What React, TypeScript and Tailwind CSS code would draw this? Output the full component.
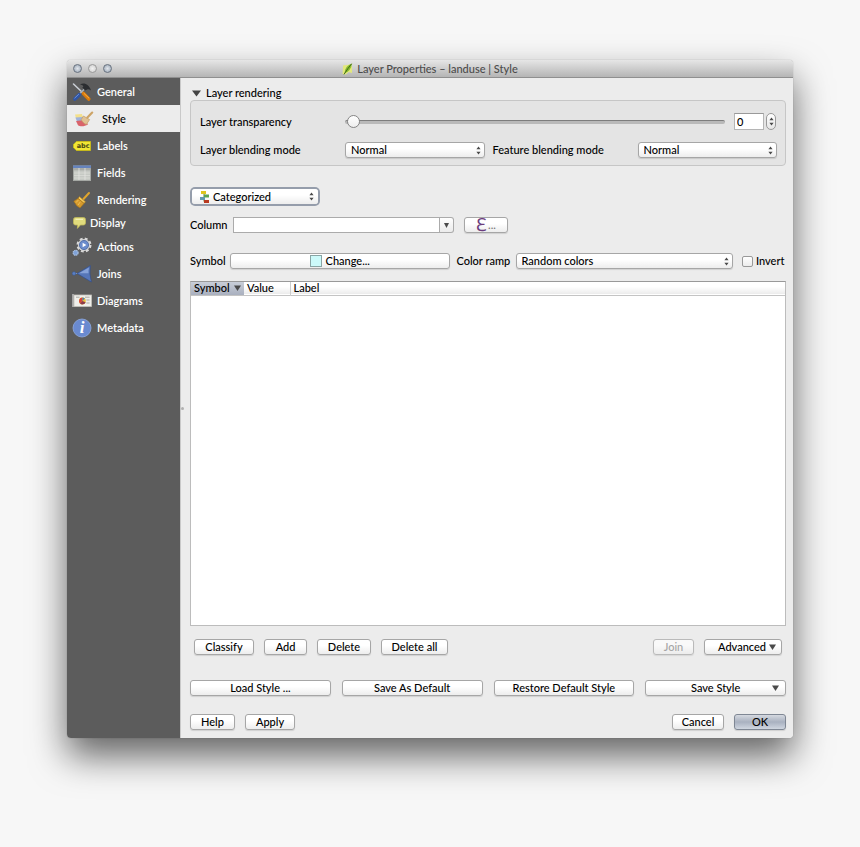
import React from "react";

const buttonLook =
  "h-4 rounded-[3px] border border-[#a6a6a6] bg-linear-to-b from-white from-40% to-[#ededed] text-center leading-[14px] shadow-[0_1px_1px_rgba(0,0,0,0.12)]";

function ToolsIcon() {
  return (
    <svg width="20" height="20" viewBox="0 0 20 20" fill="none">
      <path d="M1.5 2 L11 11" stroke="#c9ced4" strokeWidth="1.6" strokeLinecap="round" />
      <path d="M14 5.5 L7 12.5" stroke="#aab1b8" strokeWidth="1.6" />
      <path d="M7.4 12.6 L2.8 17" stroke="#2f55a5" strokeWidth="3.6" strokeLinecap="round" />
      <path d="M6.6 12.4 L2.8 16" stroke="#6f92d6" strokeWidth="1" strokeLinecap="round" />
      <path d="M11.5 11.5 L16.8 17" stroke="#d9790a" strokeWidth="3.6" strokeLinecap="round" />
      <path d="M12 11.4 L16.8 16" stroke="#f8b04a" strokeWidth="1" strokeLinecap="round" />
      <path d="M8 2.6 C11.5 .2 17 1.6 19 8.6 C17.6 7.4 16.4 7 15.2 7.4 L13 8.6 L10.4 5.4 L11.4 4.2 C10.6 3.2 9.4 2.8 8 2.6Z" fill="#2b2d30" />
    </svg>
  );
}

function StyleIcon() {
  return (
    <svg width="20" height="18" viewBox="0 0 20 18" fill="none">
      <path d="M1 4.6 L8 4 L9 8 L2 8.4Z" fill="#f3e08c" />
      <path d="M1.4 7.4 L9 7 L11 11 L3 11.4Z" fill="#9fb2dc" />
      <path d="M2 11 L11 10 L14 14.4 C10 16.8 6 16.4 4 15.2Z" fill="#d9636b" />
      <path d="M9.4 6 L15.6 9.6 L12.4 14.4 C10 13.8 8.4 12 7.2 9.6Z" fill="#e0c193" stroke="#c29c64" strokeWidth=".7" />
      <path d="M13.4 7.6 L18.2 2.6" stroke="#cda467" strokeWidth="2.2" strokeLinecap="round" />
    </svg>
  );
}

function LabelsIcon() {
  return (
    <svg width="18" height="10" viewBox="0 0 18 10">
      <path d="M3.4 .5 H17.5 V9.5 H3.4 L.5 6.6 V3.4Z" fill="#f2e634" stroke="#c6b91c" />
      <text x="10.2" y="7.4" textAnchor="middle" fontSize="6.5" fontWeight="bold" fill="#4a4714" fontFamily="DejaVu Sans, sans-serif">abc</text>
    </svg>
  );
}

function FieldsIcon() {
  return (
    <svg width="18" height="16" viewBox="0 0 18 16">
      <rect x=".5" y="1" width="17" height="14.5" fill="#c6c9c4" stroke="#a5a8a4" />
      <rect y=".5" width="18" height="2.6" fill="#6583bd" />
      <rect x="1" y="3" width="16" height="2.4" fill="#a9aca8" />
      <path d="M1 8H17M1 10.5H17M1 13H17" stroke="#dcdeda" strokeWidth=".7" />
      <path d="M6 3V15M12 3V15" stroke="#e4e5e2" strokeWidth=".8" />
    </svg>
  );
}

function BroomIcon() {
  return (
    <svg width="18" height="18" viewBox="0 0 18 18" fill="none">
      <path d="M10.5 8 L16 2" stroke="#e0a52c" strokeWidth="2" strokeLinecap="round" />
      <path d="M6.5 5.6 L12.5 10.8 L11 12.4 L5 7.4Z" fill="#f4c95a" stroke="#a87416" strokeWidth=".6" />
      <path d="M5 7.4 L11 12.4 L7 17 L3.8 14.8 L.8 10.2Z" fill="#d69a2c" stroke="#a87416" strokeWidth=".6" />
      <path d="M5.4 9 L3 11.6 M7.4 10.8 L5 14" stroke="#f3c864" strokeWidth=".8" />
    </svg>
  );
}

function BubbleIcon() {
  return (
    <svg width="13" height="12" viewBox="0 0 13 12">
      <path d="M2.5 .5 H10.5 Q12.5 .5 12.5 2.5 V6 Q12.5 8 10.5 8 H7.4 L4.4 11.4 L4.6 8 H2.5 Q.5 8 .5 6 V2.5 Q.5 .5 2.5 .5Z" fill="#e0db7d" stroke="#bfb95a" strokeWidth=".8" />
      <path d="M2.5 2.4H10" stroke="#f4f1b4" strokeWidth="1.2" />
    </svg>
  );
}

function GearsIcon() {
  return (
    <svg width="20" height="20" viewBox="0 0 20 20" fill="none">
      <circle cx="12" cy="8" r="6.4" stroke="#d8d8d8" strokeWidth="2.2" strokeDasharray="2.8 2.23" />
      <circle cx="12" cy="8" r="6" fill="#d8d8d8" />
      <circle cx="12" cy="8" r="4.6" fill="#6b8ccc" stroke="#45639e" strokeWidth=".8" />
      <path d="M10.6 5.8 L14.4 8 L10.6 10.2Z" fill="#fff" />
      <circle cx="3.6" cy="15.8" r="2.5" fill="#7fa2d8" stroke="#a9bfdf" strokeWidth="1.2" strokeDasharray="1.4 .6" />
    </svg>
  );
}

function JoinsIcon() {
  return (
    <svg width="20" height="18" viewBox="0 0 20 18">
      <path d="M4 8.5H8" stroke="#7f9bd0" />
      <circle cx="2" cy="8.5" r="1.8" fill="#5b80c4" stroke="#3a5a96" strokeWidth=".6" />
      <path d="M5 8.5 L18.4 .6 Q17 8.5 19.4 17Z" fill="#5676b8" stroke="#33508d" strokeWidth=".7" />
      <path d="M7 8.3 L17 2.4 Q16.2 5.6 16.6 8.3Z" fill="#86a2d8" />
    </svg>
  );
}

function DiagramsIcon() {
  return (
    <svg width="20" height="14" viewBox="0 0 20 14">
      <path d="M1 0V13" stroke="#d5d5d5" strokeWidth="1.2" />
      <rect x="2" y="1" width="17.5" height="11.5" fill="#f0efeb" stroke="#c4c2bb" strokeWidth=".8" />
      <path d="M4 3.2H7.6M13 3.2H17.6M14.4 6H17.6M14.4 9H17.6" stroke="#a8aaa6" />
      <circle cx="10.4" cy="7" r="3.4" fill="#e9c23b" />
      <path d="M10.4 7V3.6A3.4 3.4 0 0 0 8 9.4Z" fill="#d8433d" />
      <path d="M10.4 7L8 9.4A3.4 3.4 0 0 0 13.6 8.2Z" fill="#8b3a4e" />
      <path d="M10.4 7V3.6A3.4 3.4 0 0 1 12.8 4.6Z" fill="#4b7fb0" />
    </svg>
  );
}

function InfoIcon() {
  return (
    <svg width="20" height="20" viewBox="0 0 20 20">
      <circle cx="10" cy="10" r="9" fill="#6a8ad0" stroke="#8ea9e0" strokeWidth=".8" />
      <text x="10" y="15.4" textAnchor="middle" fontSize="17" fontStyle="italic" fontWeight="bold" fill="#fff" fontFamily="Liberation Serif, serif">i</text>
    </svg>
  );
}

const navItems = [
  { label: "General", icon: ToolsIcon },
  { label: "Style", icon: StyleIcon, selected: true },
  { label: "Labels", icon: LabelsIcon },
  { label: "Fields", icon: FieldsIcon },
  { label: "Rendering", icon: BroomIcon },
  { label: "Display", icon: BubbleIcon, small: true },
  { label: "Actions", icon: GearsIcon },
  { label: "Joins", icon: JoinsIcon },
  { label: "Diagrams", icon: DiagramsIcon },
  { label: "Metadata", icon: InfoIcon },
];

function Sidebar() {
  return (
    <nav className="flex w-[113px] shrink-0 flex-col bg-[#5c5c5c]">
      {navItems.map(({ label, icon: Icon, selected, small }) => (
        <button
          key={label}
          type="button"
          aria-current={selected ? "page" : undefined}
          className={
            selected
              ? "flex h-[27px] items-center gap-[7px] bg-[#ececec] pl-1.5 text-black"
              : small
                ? "flex h-5 items-center gap-[3px] pl-1 font-semibold text-white"
                : "flex h-[27px] items-center gap-1 pl-1 font-semibold text-white"
          }
        >
          <span className={small ? "flex w-4 justify-center" : "flex w-[22px] justify-center"}>
            <Icon />
          </span>
          {label}
        </button>
      ))}
    </nav>
  );
}

function Triangle() {
  return (
    <svg width="7" height="6" viewBox="0 0 7 6" className="shrink-0">
      <path d="M0 .4H7L3.5 6Z" fill="#4a4a4a" />
    </svg>
  );
}

function UpDown({ className = "" }: { className?: string }) {
  return (
    <svg width="5" height="9" viewBox="0 0 5 9" className={className}>
      <path d="M.4 3.2L2.5 .4L4.6 3.2ZM.4 5.8L2.5 8.6L4.6 5.8Z" fill="#4a4a4a" />
    </svg>
  );
}

type ComboProps = { id: string; value: string; className: string };

function Combo({ id, value, className }: ComboProps) {
  return (
    <div className={`relative ${className}`}>
      <select id={id} className={`block w-full appearance-none pl-[5px] text-left ${buttonLook}`}>
        <option>{value}</option>
      </select>
      <UpDown className="pointer-events-none absolute top-1 right-1" />
    </div>
  );
}

function PushButton({ className, children, disabled }: { className: string; children: React.ReactNode; disabled?: boolean }) {
  return (
    <button type="button" disabled={disabled} className={`${buttonLook} ${className}`}>
      {children}
    </button>
  );
}

function TitleBar() {
  return (
    <header className="relative flex h-[18px] shrink-0 items-center justify-center gap-1 rounded-t border-b border-[#8f8f8f] bg-linear-to-b from-[#e6e6e6] to-[#b5b5b5] text-[#4c4c4c]">
      <div className="absolute left-1.5 flex gap-[6px]">
        <button type="button" aria-label="Close" className="size-[9px] rounded-full border border-[#697380] bg-radial from-[#e1e6ec] to-[#98a3b2]" />
        <button type="button" aria-label="Minimize" className="size-[9px] rounded-full border border-[#9a9a9a] bg-radial from-[#f2f2f2] to-[#cccccc]" />
        <button type="button" aria-label="Zoom" className="size-[9px] rounded-full border border-[#697380] bg-radial from-[#e1e6ec] to-[#98a3b2]" />
      </div>
      <svg width="11" height="12" viewBox="0 0 11 12">
        <path d="M1 2.5L8 1.4L10 4V10L6.6 9L4 11.6L.6 11Z" fill="#e2e87c" />
        <path d="M10 .4Q3 2.6 2.6 10Q9 8 10 .4Z" fill="#86b92c" />
        <path d="M9.6 .8Q6 5 2 11.4" stroke="#3f6b18" strokeWidth="1" fill="none" />
      </svg>
      <h1>Layer Properties – landuse | Style</h1>
    </header>
  );
}

function LayerRendering() {
  return (
    <section>
      <button type="button" className="flex h-[14px] items-center gap-[5px] pl-0.5">
        <svg width="9" height="7" viewBox="0 0 9 7">
          <path d="M0 .5H9L4.5 6.5Z" fill="#444" />
        </svg>
        Layer rendering
      </button>
      <div className="flex flex-col gap-3 rounded border border-[#c6c6c6] bg-[#e4e4e4] pt-3 pr-2 pb-[7px] pl-[9px]">
        <div className="flex h-[17px] items-center">
          <label htmlFor="transparency" className="w-[145px] shrink-0">Layer transparency</label>
          <input
            id="transparency"
            type="range"
            min="0"
            max="100"
            defaultValue="0"
            className="h-[14px] min-w-0 flex-1 appearance-none bg-transparent [&::-webkit-slider-runnable-track]:h-1 [&::-webkit-slider-runnable-track]:rounded-full [&::-webkit-slider-runnable-track]:border-t [&::-webkit-slider-runnable-track]:border-[#7d7d7d] [&::-webkit-slider-runnable-track]:bg-[#b9b9b9] [&::-webkit-slider-thumb]:-mt-[6px] [&::-webkit-slider-thumb]:ml-0.5 [&::-webkit-slider-thumb]:size-[13px] [&::-webkit-slider-thumb]:appearance-none [&::-webkit-slider-thumb]:rounded-full [&::-webkit-slider-thumb]:border [&::-webkit-slider-thumb]:border-[#858585] [&::-webkit-slider-thumb]:bg-linear-to-b [&::-webkit-slider-thumb]:from-white [&::-webkit-slider-thumb]:to-[#eeeeee]"
          />
          <input
            aria-label="Transparency value"
            defaultValue="0"
            className="ml-[9px] h-[17px] w-[30px] border border-[#b5b5b5] border-t-[#999] bg-white pl-0.5 leading-[14px]"
          />
          <button type="button" aria-label="Step value" className="mr-px ml-0.5 flex h-[17px] w-[10px] items-center justify-center rounded-full border border-[#999] bg-linear-to-b from-white to-[#e6e6e6]">
            <UpDown />
          </button>
        </div>
        <div className="flex items-center">
          <label htmlFor="layer-blend" className="w-[145px] shrink-0">Layer blending mode</label>
          <Combo id="layer-blend" value="Normal" className="min-w-0 flex-1" />
          <label htmlFor="feature-blend" className="ml-2 w-[145px] shrink-0">Feature blending mode</label>
          <Combo id="feature-blend" value="Normal" className="min-w-0 flex-1" />
        </div>
      </div>
    </section>
  );
}

function RendererSelect() {
  return (
    <div className="relative mt-[23px] ml-0.5 w-[126px] rounded-[3px] ring-2 ring-[#959dab]">
      <select aria-label="Renderer" className="block h-[15px] w-full appearance-none rounded-[3px] bg-linear-to-b from-white from-40% to-[#ededed] pl-[21px] leading-[15px]">
        <option>Categorized</option>
      </select>
      <svg width="10" height="12" viewBox="0 0 10 12" className="pointer-events-none absolute top-0.5 left-2">
        <path d="M4 2V10.5M4 5.5H6M2 8.5H4M4 10.5H6" stroke="#66823e" fill="none" />
        <rect x="1" y="0" width="5" height="3" fill="#dfc51e" />
        <rect x="4" y="3.5" width="5" height="3" fill="#5ba352" />
        <rect x="0" y="6" width="5" height="3" fill="#619ab0" />
        <rect x="4" y="9" width="5" height="3" fill="#b83920" />
      </svg>
      <UpDown className="pointer-events-none absolute top-[3px] right-1" />
    </div>
  );
}

function SymbolSettings() {
  return (
    <>
      <div className="mt-[13px] flex h-4 items-center">
        <label htmlFor="column" className="w-[43px] shrink-0">Column</label>
        <input id="column" className="h-4 w-[207px] border border-[#ababab] bg-white px-1" />
        <button type="button" aria-label="Show columns" className="flex h-4 w-[14px] items-center justify-center rounded-r-[3px] border border-l-0 border-[#ababab] bg-linear-to-b from-white to-[#ebebeb]">
          <svg width="5" height="5" viewBox="0 0 5 5">
            <path d="M0 0H5L2.5 5Z" fill="#4a4a4a" />
          </svg>
        </button>
        <PushButton className="ml-[10px] flex w-11 items-center justify-center gap-px">
          <span className="font-['Liberation_Serif',serif] text-lg leading-[14px] text-[#6b3d7d]">ℇ</span>
          <span className="text-[#777]">...</span>
        </PushButton>
      </div>
      <div className="mt-5 flex h-4 items-center">
        <span className="w-10 shrink-0">Symbol</span>
        <PushButton className="flex min-w-0 flex-1 items-center justify-center gap-1">
          <span className="size-3 border border-[#8aa5a5] bg-[#ccfafa]" />
          Change...
        </PushButton>
        <label htmlFor="ramp" className="ml-[7px] w-[59px] shrink-0">Color ramp</label>
        <Combo id="ramp" value="Random colors" className="min-w-0 flex-1" />
        <label className="ml-[9px] flex w-11 items-center gap-[3px]">
          <input type="checkbox" className="size-[11px] shrink-0 appearance-none rounded-xs border border-[#999] bg-linear-to-b from-white to-[#ececec]" />
          Invert
        </label>
      </div>
    </>
  );
}

function CategoryTable() {
  return (
    <div className="mt-3 min-h-[200px] flex-1 border border-[#bcbcbc] border-t-[#999] bg-white">
      <table className="w-full table-fixed border-collapse">
        <thead>
          <tr className="h-[13px] border-b border-[#c4c4c4] bg-linear-to-b from-white from-40% to-[#ececec] text-left leading-3">
            <th className="w-[53px] bg-linear-to-b from-[#c9ced8] to-[#a9b0bf] p-0 pl-[3px] font-medium">
              <span className="flex items-center gap-1">
                Symbol
                <Triangle />
              </span>
            </th>
            <th className="w-[46px] border-r border-[#ccc] p-0 pl-[3px] font-medium">Value</th>
            <th className="p-0 pl-[3px] font-medium">Label</th>
          </tr>
        </thead>
        <tbody />
      </table>
    </div>
  );
}

function Footer() {
  return (
    <footer>
      <div className="mt-[13px] flex gap-[10px] pr-1 pl-1">
        <PushButton className="w-[60px]">Classify</PushButton>
        <PushButton className="w-[43px]">Add</PushButton>
        <PushButton className="w-[54px]">Delete</PushButton>
        <PushButton className="w-[67px]">Delete all</PushButton>
        <PushButton disabled className="ml-auto w-[41px] text-[#888] opacity-70">Join</PushButton>
        <PushButton className="flex w-[78px] items-center justify-center gap-[3px] pl-2">
          Advanced
          <Triangle />
        </PushButton>
      </div>
      <div className="mt-[25px] grid grid-cols-4 gap-[11px]">
        <PushButton className="w-full">Load Style ...</PushButton>
        <PushButton className="w-full">Save As Default</PushButton>
        <PushButton className="w-full">Restore Default Style</PushButton>
        <PushButton className="flex w-full items-center pr-[6px] pl-[13px]">
          <span className="flex-1">Save Style</span>
          <Triangle />
        </PushButton>
      </div>
      <div className="mt-[18px] flex gap-[10px]">
        <PushButton className="w-[45px]">Help</PushButton>
        <PushButton className="w-[50px]">Apply</PushButton>
        <PushButton className="ml-auto w-[52px]">Cancel</PushButton>
        <button type="submit" className="h-4 w-[52px] rounded-[3px] border border-[#7f8794] bg-linear-to-b from-[#d5d9e0] via-[#a9b1c0] to-[#cfd6e0] leading-[14px] shadow-[0_1px_1px_rgba(0,0,0,0.12)]">
          OK
        </button>
      </div>
    </footer>
  );
}

export default function App() {
  return (
    <div className="flex min-h-screen bg-[#f7f7f7] px-[67px] pt-[60px] pb-[109px] font-['Lato',sans-serif] text-[11px] leading-[14px] font-medium text-black">
      <main className="flex min-w-0 flex-1 flex-col rounded shadow-[0_18px_36px_rgba(0,0,0,0.6),0_0_1px_rgba(0,0,0,0.4)]">
        <TitleBar />
        <div className="flex min-h-0 flex-1 overflow-hidden rounded-b">
          <Sidebar />
          <div className="flex w-[10px] shrink-0 items-center border-l border-[#c9c9c9] bg-[#ececec]">
            <span className="size-[3px] rounded-full bg-[#b0b0b0]" />
          </div>
          <form className="flex min-w-0 flex-1 flex-col bg-[#ececec] pt-2 pr-[7px] pb-2" onSubmit={(event) => event.preventDefault()}>
            <LayerRendering />
            <RendererSelect />
            <SymbolSettings />
            <CategoryTable />
            <Footer />
          </form>
        </div>
      </main>
    </div>
  );
}
